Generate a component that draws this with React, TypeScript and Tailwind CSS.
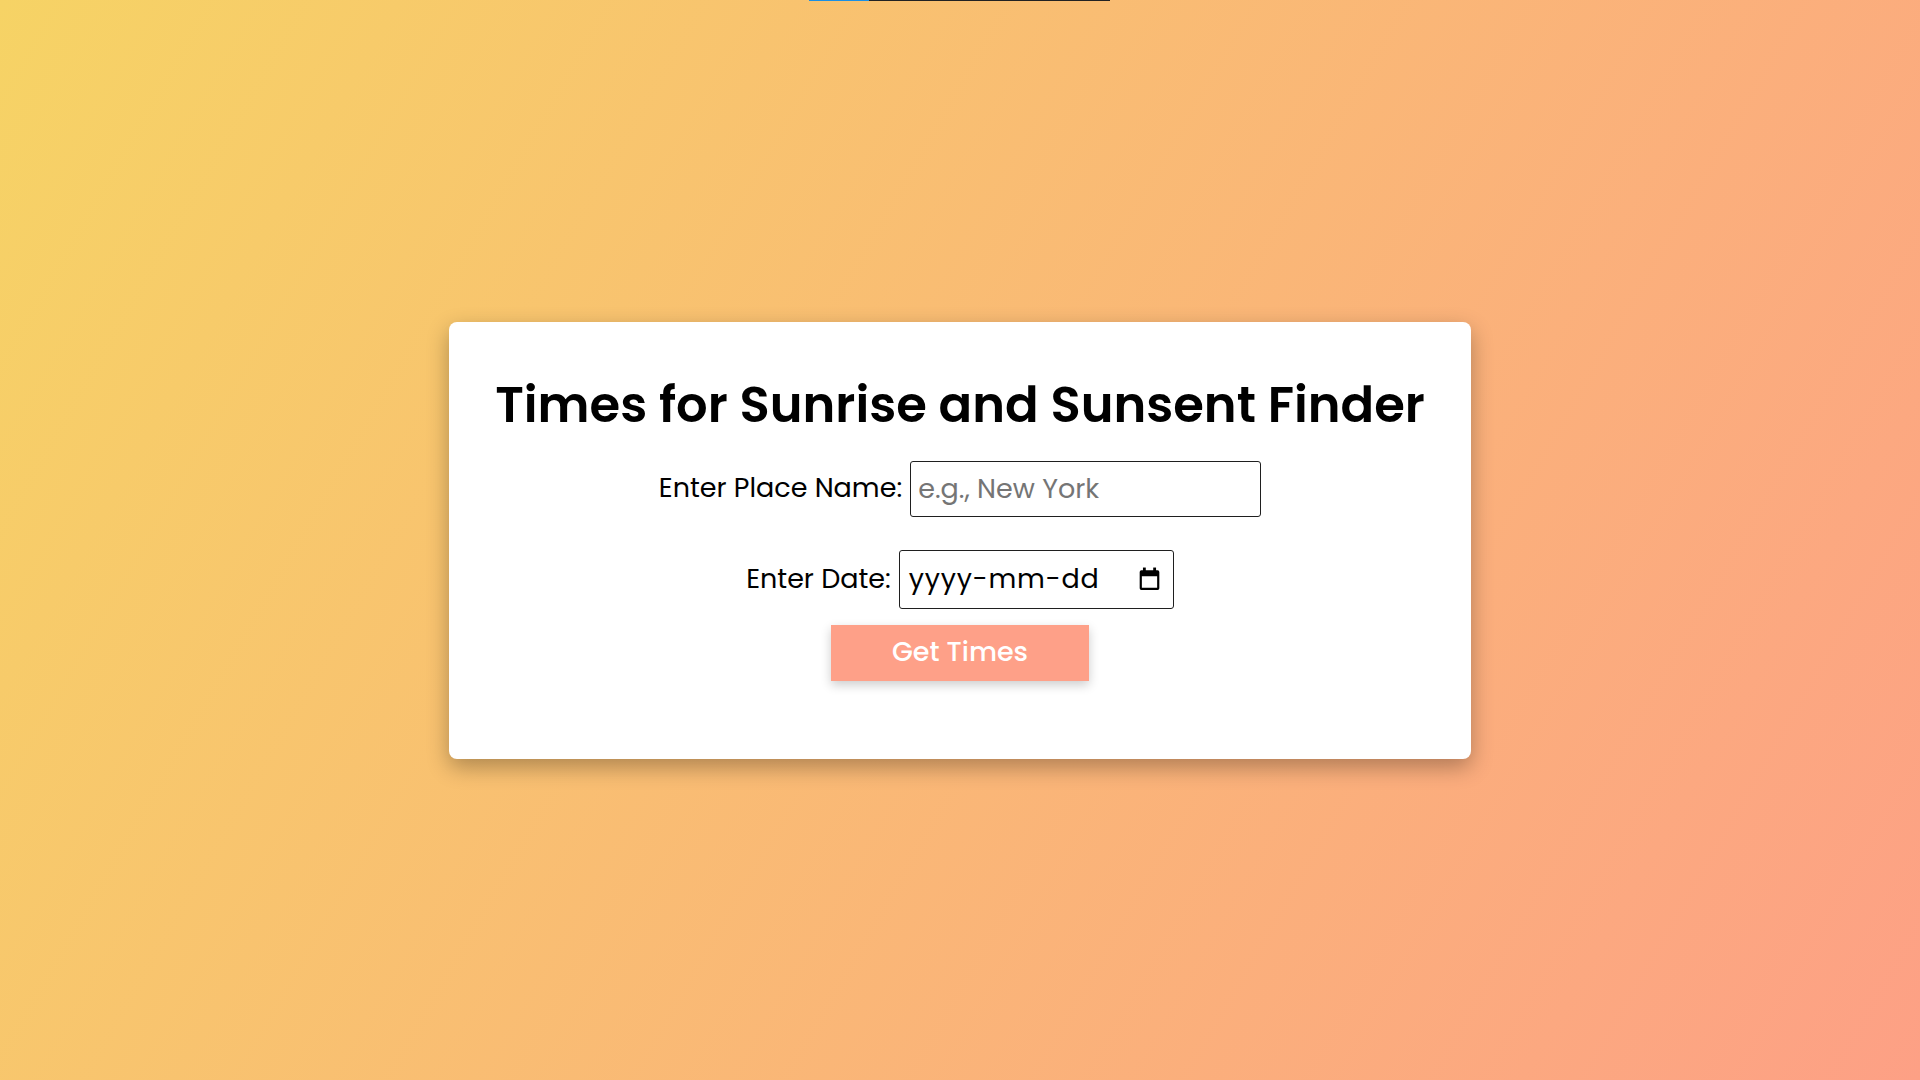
import React from "react";

function CalendarIcon() {
  return (
    <svg width="23" height="24" viewBox="0 0 20 22" aria-hidden="true">
      <rect x="4" y="0.5" width="2.6" height="4" fill="#000" />
      <rect x="13.4" y="0.5" width="2.6" height="4" fill="#000" />
      <path
        d="M2.5 3h15a1.5 1.5 0 0 1 1.5 1.5v15a1.5 1.5 0 0 1-1.5 1.5h-15A1.5 1.5 0 0 1 1 19.5v-15A1.5 1.5 0 0 1 2.5 3zM3 8.5v10.5h14V8.5z"
        fill="#000"
        fillRule="evenodd"
      />
    </svg>
  );
}

export default function App() {
  return (
    <div
      className="relative min-h-screen w-full flex items-center justify-center bg-[linear-gradient(120deg,#f6d365_0%,#fda085_100%)]"
      style={{ fontFamily: 'Poppins, "Open Sans", "Noto Sans", sans-serif' }}
    >
      <div className="absolute top-0 left-[809px] flex h-[1px] w-[301px]">
        <div className="h-full w-[60px] bg-[#1a8fe3]" />
        <div className="h-full flex-1 bg-[#222]" />
      </div>

      <div className="w-[1022px] bg-white rounded-[8px] shadow-[0_8px_22px_rgba(0,0,0,0.3)] pt-[52px] pb-[78px] flex flex-col items-center">
        <h1 className="text-[49.6px] leading-[62px] font-semibold text-black">
          Times for Sunrise and Sunsent Finder
        </h1>

        <div className="mt-[25px] flex items-center gap-2">
          <label className="text-[27px] text-black">Enter Place Name:</label>
          <input
            type="text"
            placeholder="e.g., New York"
            className="w-[351px] h-[56px] border border-[#1f1f1f] rounded-[3px] px-[7px] text-[27px] text-black placeholder:text-[#757575] outline-none"
          />
        </div>

        <div className="mt-[33px] flex items-center gap-2">
          <label className="text-[27px] text-black">Enter Date:</label>
          <div className="w-[275px] h-[59px] border border-[#1f1f1f] rounded-[3px] pl-[9px] pr-[12px] flex items-center justify-between">
            <span className="text-[27px] text-black tracking-[0.8px]">yyyy-mm-dd</span>
            <CalendarIcon />
          </div>
        </div>

        <button className="mt-[16px] w-[258px] h-[56px] bg-[#fea088] text-white text-[27px] font-medium shadow-[0_4px_10px_rgba(0,0,0,0.2)]">
          Get Times
        </button>
      </div>
    </div>
  );
}
